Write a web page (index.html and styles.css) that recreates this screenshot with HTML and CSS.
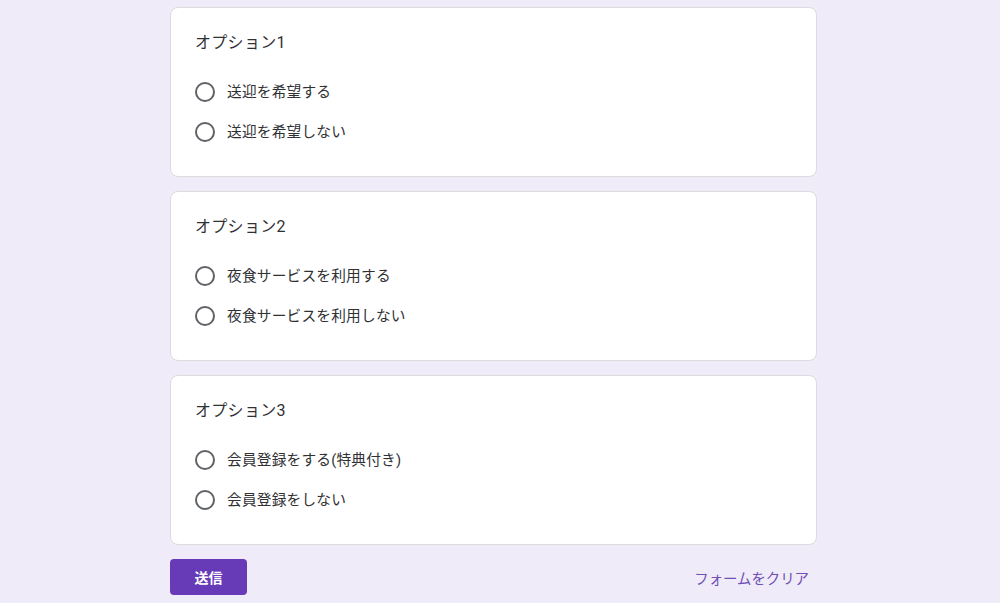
FILE: index.html
```html
<!DOCTYPE html>
<html lang="ja">
<head>
<meta charset="utf-8">
<link rel="stylesheet" href="styles.css">
</head>
<body>
<div class="form">
  <div class="card">
    <div class="title">オプション1</div>
    <div class="opt"><span class="radio"></span><span class="label">送迎を希望する</span></div>
    <div class="opt"><span class="radio"></span><span class="label">送迎を希望しない</span></div>
  </div>
  <div class="card">
    <div class="title">オプション2</div>
    <div class="opt"><span class="radio"></span><span class="label">夜食サービスを利用する</span></div>
    <div class="opt"><span class="radio"></span><span class="label">夜食サービスを利用しない</span></div>
  </div>
  <div class="card">
    <div class="title">オプション3</div>
    <div class="opt"><span class="radio"></span><span class="label">会員登録をする(特典付き)</span></div>
    <div class="opt"><span class="radio"></span><span class="label">会員登録をしない</span></div>
  </div>
  <div class="actions">
    <button class="submit">送信</button>
    <span class="clear">フォームをクリア</span>
  </div>
</div>
</body>
</html>
```
FILE: styles.css
```css
html, body {
  margin: 0;
  padding: 0;
  background: #f0ebf8;
  font-family: Roboto, "Noto Sans CJK JP", sans-serif;
  color: #202124;
}
.form {
  width: 647px;
  margin-left: 170px;
  padding-top: 7px;
}
.card {
  box-sizing: border-box;
  height: 170px;
  background: #fff;
  border: 1px solid #dadce0;
  border-radius: 8px;
  padding: 23px 24px 24px;
  margin-bottom: 14px;
}
.title {
  font-size: 16px;
  line-height: 24px;
  letter-spacing: 0.3px;
  margin-bottom: 17px;
  color: #303134;
}
.opt {
  display: flex;
  align-items: center;
  height: 40px;
}
.radio {
  box-sizing: border-box;
  width: 20px;
  height: 20px;
  border: 2px solid #5f6368;
  border-radius: 50%;
  margin-right: 12px;
  flex: none;
}
.label {
  font-size: 14.7px;
  letter-spacing: 0.2px;
  line-height: 20px;
  color: #303134;
}
.actions {
  display: flex;
  justify-content: space-between;
  align-items: center;
}
.submit {
  width: 77px;
  height: 36px;
  border: none;
  border-radius: 4px;
  background: #673ab7;
  color: #fff;
  font-family: Roboto, "Noto Sans CJK JP", sans-serif;
  font-size: 14px;
  font-weight: 700;
  padding: 0;
}
.clear {
  color: #6f4fb4;
  font-size: 14.4px;
  padding: 0 8px;
}
```
